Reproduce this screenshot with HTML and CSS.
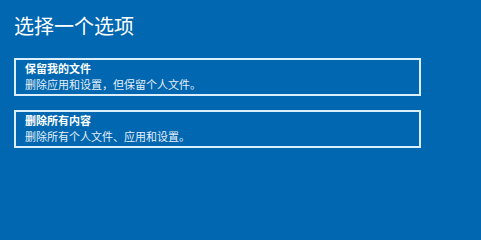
FILE: index.html
```html
<!DOCTYPE html>
<html lang="zh-CN">
<head>
<meta charset="utf-8">
<title>选择一个选项</title>
<link rel="stylesheet" href="styles.css">
</head>
<body>
<main class="page">
  <h1 class="title">选择一个选项</h1>
  <div class="options">
    <div class="option">
      <div class="option-name">保留我的文件</div>
      <div class="option-desc">删除应用和设置，但保留个人文件。</div>
    </div>
    <div class="option">
      <div class="option-name">删除所有内容</div>
      <div class="option-desc">删除所有个人文件、应用和设置。</div>
    </div>
  </div>
</main>
</body>
</html>
```
FILE: styles.css
```css
html, body {
  margin: 0;
  padding: 0;
  background: #0067b0;
  height: 100%;
}
body {
  font-family: "Noto Sans CJK SC", "Noto Sans", sans-serif;
  color: #ffffff;
}
.page {
  padding: 12px 0 0 14px;
}
.title {
  margin: 0 0 18px 0;
  font-size: 20px;
  line-height: 28px;
  font-weight: 400;
  color: #ffffff;
}
.options {
  display: flex;
  flex-direction: column;
  gap: 14px;
}
.option {
  box-sizing: border-box;
  width: 407px;
  border: 2px solid #d9effc;
  padding: 0 9px 2px 9px;
}
.option-name {
  font-size: 11px;
  line-height: 16px;
  font-weight: 700;
  color: #ffffff;
}
.option-desc {
  font-size: 11px;
  line-height: 16px;
  font-weight: 400;
  color: #e4eff8;
}
```
